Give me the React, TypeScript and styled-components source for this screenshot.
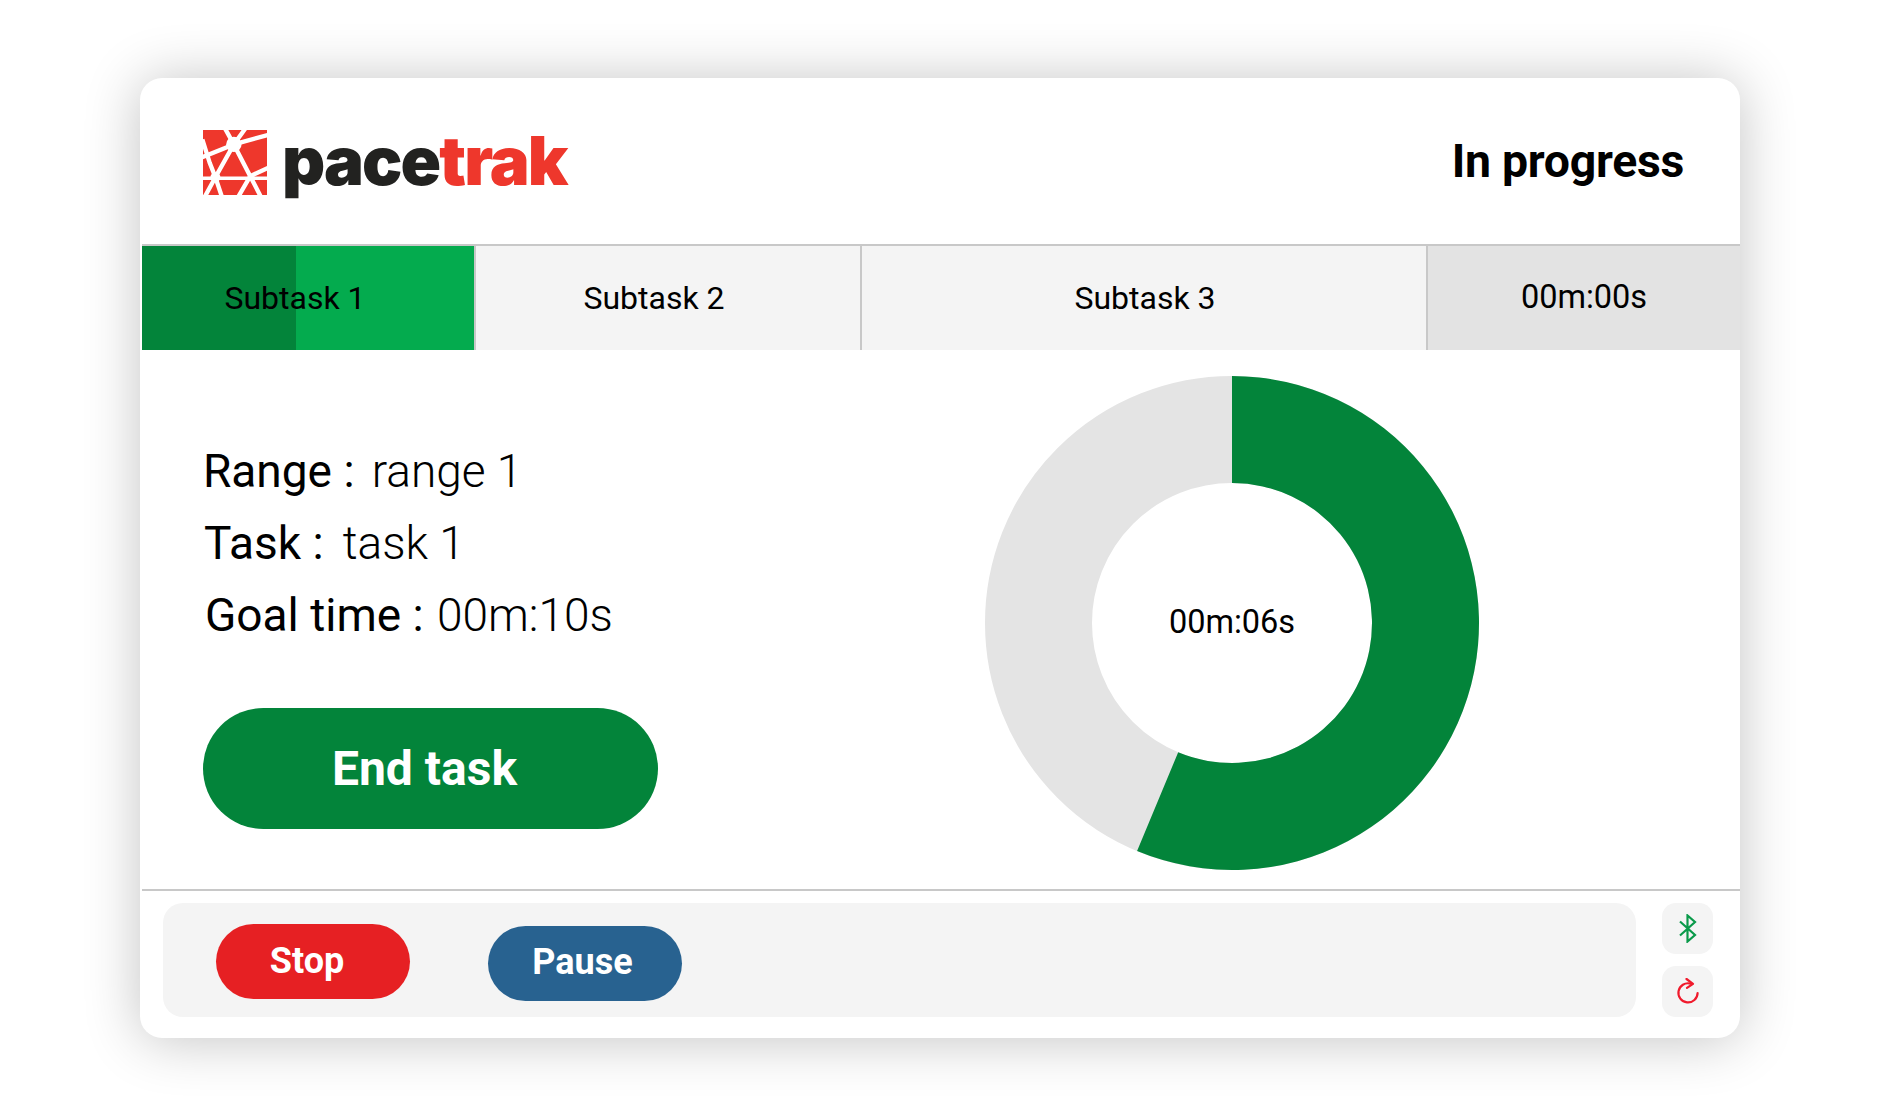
import React from "react";
import styled, { createGlobalStyle } from "styled-components";

const Global = createGlobalStyle`
  html, body { margin: 0; padding: 0; background: #fff; }
  body { font-family: Roboto, "Liberation Sans", sans-serif; color: #000; }
`;

const Page = styled.div`
  width: 1880px;
  height: 1120px;
  padding: 78px 140px 82px;
  box-sizing: border-box;
`;

const Card = styled.div`
  width: 1600px;
  height: 960px;
  background: #fff;
  border-radius: 22px;
  box-shadow: 0 2px 56px rgba(0, 0, 0, 0.24);
  display: flex;
  flex-direction: column;
  overflow: hidden;
`;

const Header = styled.header`
  height: 166px;
  flex: none;
  display: flex;
  align-items: center;
  justify-content: space-between;
  padding: 0 56px 0 63px;
`;

const Brand = styled.div`
  display: flex;
  align-items: center;
  gap: 15px;
  padding-top: 2px;
`;

const Word = styled.span`
  font-family: Inter, sans-serif;
  font-weight: 900;
  font-size: 67px;
  line-height: 1;
  letter-spacing: -1.9px;
  color: #222220;
  margin-bottom: 4px;
`;

const WordAccent = styled.span`
  color: #ee372c;
`;

const Status = styled.h1`
  margin: 0;
  font-size: 46.4px;
  font-weight: 700;
  letter-spacing: -0.3px;
`;

const TabRow = styled.div`
  height: 106px;
  flex: none;
  margin-left: 2px;
  border-top: 2px solid #c8c8c8;
  box-sizing: border-box;
  display: flex;
`;

const Tab = styled.div<{ $w: number; $bg: string; $shift?: number }>`
  position: relative;
  width: ${(p) => p.$w}px;
  flex: none;
  box-sizing: border-box;
  background: ${(p) => p.$bg};
  border-right: 2px solid #c8c8c8;
  display: flex;
  align-items: center;
  justify-content: center;
  font-size: 32px;
  padding-right: ${(p) => Math.max(p.$shift ?? 0, 0)}px;
  padding-left: ${(p) => Math.max(-(p.$shift ?? 0), 0)}px;
  &:last-child { border-right: 0; flex: 1; }
`;

const TabFill = styled.div<{ $w: number }>`
  position: absolute;
  left: 0;
  top: 0;
  bottom: 0;
  width: ${(p) => p.$w}px;
  background: #03843a;
`;

const TabLabel = styled.span`
  position: relative;
`;

const TimerLabel = styled.span`
  font-size: 32.5px;
  padding-bottom: 2px;
`;

const Body = styled.main`
  height: 541px;
  flex: none;
  display: flex;
  margin-left: 2px;
  border-bottom: 2px solid #c8c8c8;
  box-sizing: border-box;
`;

const InfoColumn = styled.section`
  width: 700px;
  flex: none;
  padding: 85px 0 0 61px;
  box-sizing: border-box;
`;

const InfoLine = styled.div`
  font-size: 46px;
  line-height: 72px;
  font-weight: 300;
  white-space: pre;
`;

const InfoKey = styled.span<{ $gap: number; $inset?: number }>`
  font-weight: 400;
  margin-left: ${(p) => p.$inset ?? 0}px;
  margin-right: ${(p) => p.$gap}px;
`;

const EndButton = styled.button`
  display: flex;
  align-items: center;
  justify-content: center;
  margin-top: 57px;
  width: 455px;
  height: 121px;
  padding: 0 12px 0 0;
  border: 0;
  border-radius: 61px;
  background: #03843a;
  color: #fff;
  font-family: inherit;
  font-size: 48px;
  font-weight: 700;
`;

const ChartColumn = styled.section`
  flex: 1;
  padding: 26px 0 0 143px;
`;

const Donut = styled.div`
  position: relative;
  width: 494px;
  height: 494px;
`;

const DonutCenter = styled.div`
  position: absolute;
  inset: 0 0 2px 0;
  display: flex;
  align-items: center;
  justify-content: center;
  font-size: 32.5px;
`;

const Footer = styled.footer`
  flex: 1;
  display: flex;
  padding: 12px 27px 21px 23px;
  gap: 26px;
`;

const Controls = styled.div`
  flex: 1;
  background: #f4f4f4;
  border-radius: 20px;
  display: flex;
  align-items: center;
  padding: 5px 0 0 53px;
  gap: 78px;
`;

const Pill = styled.button<{ $bg: string; $y: number; $textDrop: number; $textRight: number }>`
  width: 194px;
  height: 75px;
  border: 0;
  border-radius: 38px;
  background: ${(p) => p.$bg};
  color: #fff;
  font-family: inherit;
  font-size: 36px;
  font-weight: 700;
  padding: 0 ${(p) => p.$textRight}px ${(p) => p.$textDrop}px 0;
  transform: translateY(${(p) => p.$y}px);
`;

const Side = styled.div`
  display: flex;
  flex-direction: column;
  justify-content: space-between;
`;

const IconBox = styled.div`
  width: 51px;
  height: 51px;
  border-radius: 14px;
  background: #f4f4f4;
  display: flex;
  align-items: center;
  justify-content: center;
`;

const Logo = () => (
  <svg width="64" height="65" viewBox="26 14 191 194" aria-hidden="true">
    <rect x="26" y="14" width="191" height="194" fill="#ee372c" />
    <g stroke="#fff" strokeWidth="13" fill="none">
      <path d="M92 10 L118 57 L152 10" />
      <path d="M118 57 L222 28" />
      <path d="M118 57 L22 96" />
      <path d="M24 42 L46 112 L63 155 L82 212" />
      <path d="M118 57 L63 155 L32 212" />
      <path d="M118 57 L167 152 L198 212" />
      <path d="M22 158 L222 158" strokeWidth="10" />
      <path d="M222 126 L167 152 L132 212" />
    </g>
    <circle cx="118" cy="57" r="23" fill="#fff" />
    <circle cx="63" cy="155" r="15" fill="#fff" />
  </svg>
);

const BluetoothIcon = () => (
  <svg width="18" height="29" viewBox="0 0 18 29" fill="none" aria-hidden="true">
    <path d="M1 7.5 L16 21 L8.5 27.5 V1.5 L16 8 L1 21.5" stroke="#0a9a4a" strokeWidth="2.2" />
  </svg>
);

const ReloadIcon = () => (
  <svg width="24" height="27" viewBox="0 0 24 27" fill="none" aria-hidden="true">
    <path d="M14.5 5.6 A9.6 9.6 0 1 0 21.6 15" stroke="#f01a2c" strokeWidth="2.2" strokeLinecap="round" />
    <path d="M10.5 1 L17 5.8 L11 9.8" stroke="#f01a2c" strokeWidth="2.2" strokeLinecap="round" strokeLinejoin="round" />
  </svg>
);

const ring = (cx: number, cy: number, R: number, r: number, end: number) => {
  const a = (end * Math.PI) / 180;
  const [sx, sy] = [Math.sin(a), -Math.cos(a)];
  const large = end > 180 ? 1 : 0;
  return `M${cx} ${cy - R} A${R} ${R} 0 ${large} 1 ${cx + R * sx} ${cy + R * sy} L${cx + r * sx} ${cy + r * sy} A${r} ${r} 0 ${large} 0 ${cx} ${cy - r} Z`;
};

export default function App() {
  return (
    <Page>
      <Global />
      <Card>
        <Header>
          <Brand>
            <Logo />
            <Word>pace<WordAccent>trak</WordAccent></Word>
          </Brand>
          <Status>In progress</Status>
        </Header>
        <TabRow>
          <Tab $w={334} $bg="#04ab4e" $shift={26}>
            <TabFill $w={154} />
            <TabLabel>Subtask 1</TabLabel>
          </Tab>
          <Tab $w={386} $bg="#f4f4f4" $shift={28}><TabLabel>Subtask 2</TabLabel></Tab>
          <Tab $w={566} $bg="#f4f4f4" $shift={-2}><TabLabel>Subtask 3</TabLabel></Tab>
          <Tab $w={312} $bg="#e3e3e3"><TimerLabel>00m:00s</TimerLabel></Tab>
        </TabRow>
        <Body>
          <InfoColumn>
            <InfoLine><InfoKey $gap={6}>Range :</InfoKey> range 1</InfoLine>
            <InfoLine><InfoKey $gap={8} $inset={1}>Task :</InfoKey> task 1</InfoLine>
            <InfoLine><InfoKey $gap={2} $inset={2}>Goal time :</InfoKey> 00m:10s</InfoLine>
            <EndButton>End task</EndButton>
          </InfoColumn>
          <ChartColumn>
            <Donut>
              <svg width="494" height="494" viewBox="0 0 494 494" aria-hidden="true">
                <circle cx="247" cy="247" r="193.5" fill="none" stroke="#e4e4e4" strokeWidth="107" />
                <path d={ring(247, 247, 247, 140, 202.6)} fill="#03843a" />
              </svg>
              <DonutCenter>00m:06s</DonutCenter>
            </Donut>
          </ChartColumn>
        </Body>
        <Footer>
          <Controls>
            <Pill $bg="#e62023" $y={-1} $textDrop={1} $textRight={12}>Stop</Pill>
            <Pill $bg="#286290" $y={1} $textDrop={4} $textRight={5}>Pause</Pill>
          </Controls>
          <Side>
            <IconBox><BluetoothIcon /></IconBox>
            <IconBox><ReloadIcon /></IconBox>
          </Side>
        </Footer>
      </Card>
    </Page>
  );
}
